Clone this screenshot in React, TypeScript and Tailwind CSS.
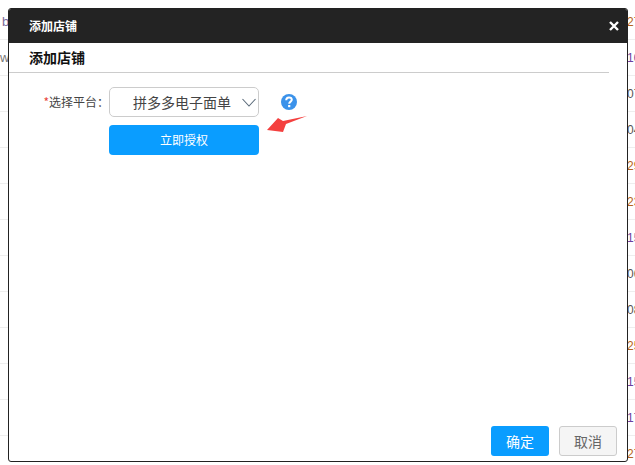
const rows = [
  { left: "b", leftColor: "pl-[2px] text-[#7a6a9a]", right: "27", rightColor: "text-[#b5651d]" },
  { left: "w", leftColor: "text-[#777777]", right: "10", rightColor: "text-[#6a3fa0]" },
  { left: "", leftColor: "", right: "07", rightColor: "text-[#555555]" },
  { left: "", leftColor: "", right: "04", rightColor: "text-[#555555]" },
  { left: "", leftColor: "", right: "29", rightColor: "text-[#b5651d]" },
  { left: "", leftColor: "", right: "23", rightColor: "text-[#b5651d]" },
  { left: "", leftColor: "", right: "15", rightColor: "text-[#6a3fa0]" },
  { left: "", leftColor: "", right: "06", rightColor: "text-[#555555]" },
  { left: "", leftColor: "", right: "08", rightColor: "text-[#555555]" },
  { left: "", leftColor: "", right: "25", rightColor: "text-[#b5651d]" },
  { left: "", leftColor: "", right: "15", rightColor: "text-[#6a3fa0]" },
  { left: "", leftColor: "", right: "17", rightColor: "text-[#6a3fa0]" },
  { left: "", leftColor: "", right: "27", rightColor: "text-[#b5651d]" },
];

const App = () => {
  return (
    <div className="relative h-[465px] w-[635px] overflow-hidden bg-white font-['Noto_Sans_CJK_SC','Liberation_Sans',sans-serif]">
      {/* Table behind the dialog, wider than the window so the last column is cut */}
      <div className="w-[650px] pt-[4px] font-['Liberation_Sans',sans-serif] text-[12px]">
        {rows.map((row, i) => (
          <div
            key={i}
            className="flex h-[36px] items-center justify-between border-b border-[#eeeeee]"
          >
            <span className={`text-[13px] ${row.leftColor}`}>{row.left}</span>
            <span className={`w-[23px] ${row.rightColor}`}>{row.right}</span>
          </div>
        ))}
      </div>

      {/* Dialog */}
      <div className="absolute left-[8px] top-[8px] flex h-[454px] w-[620px] flex-col overflow-hidden rounded-[3px] border border-[#222222] bg-white">
        <div className="flex h-[34px] shrink-0 items-center justify-between bg-[#232323] pl-[20px] pr-[8px] text-white">
          <span className="text-[12px] font-bold">添加店铺</span>
          <svg className="h-[10px] w-[10px]" viewBox="0 0 10 10">
            <path d="M1 1L9 9M9 1L1 9" stroke="#ffffff" strokeWidth="2.4" fill="none" />
          </svg>
        </div>

        <div className="mr-[18px] flex h-[30px] shrink-0 items-center border-b border-[#cccccc] pl-[20px] text-[14px] font-bold text-[#111111]">
          添加店铺
        </div>

        <div className="flex-1 pt-[14px]">
          <div className="flex items-start">
            <label className="flex h-[30px] w-[100px] shrink-0 items-center justify-end text-[12px] text-[#444444]">
              <span className="text-[#e8453c]">*</span>选择平台：
            </label>
            <div className="flex w-[150px] flex-col gap-[8px]">
              <div className="flex h-[30px] items-center justify-between rounded-[5px] border border-[#cccccc] pl-[23px] pr-[2px] text-[14px] text-[#444444]">
                <span>拼多多电子面单</span>
                <svg className="h-[9px] w-[14px]" viewBox="0 0 14 9">
                  <path d="M0.5 1L7 8L13.5 1" stroke="#5a6a7a" strokeWidth="1.1" fill="none" />
                </svg>
              </div>
              <button className="h-[30px] rounded-[4px] bg-[#0a9dff] text-[12px] text-white">立即授权</button>
            </div>
            <svg className="ml-[22px] mt-[7px] h-[16px] w-[16px] shrink-0" viewBox="0 0 16 16">
              <circle cx="8" cy="8" r="8" fill="#3b92ea" />
              <path d="M5.2 6.2C5.2 4.5 6.4 3.4 8 3.4C9.6 3.4 10.8 4.4 10.8 5.8C10.8 7.6 8.2 7.7 8.2 9.8" stroke="#ffffff" strokeWidth="2" fill="none" />
              <rect x="7.1" y="11" width="2.2" height="2.2" fill="#ffffff" />
            </svg>
          </div>
        </div>

        <div className="flex shrink-0 justify-end gap-[10px] pb-[5px] pr-[10px]">
          <button className="h-[30px] w-[58px] rounded-[3px] bg-[#0a9dff] text-[14px] text-white">确定</button>
          <button className="h-[30px] w-[58px] rounded-[3px] border border-[#cccccc] bg-[#f5f5f5] text-[14px] text-[#666666]">取消</button>
        </div>
      </div>

      {/* Red annotation arrow */}
      <svg className="absolute left-[262px] top-[112px] h-[24px] w-[48px]" viewBox="0 0 48 24">
        <polygon points="5,18 16,6 21,9 45,4 24,12 21,20" fill="#f4403f" />
      </svg>
    </div>
  );
};

export default App;
